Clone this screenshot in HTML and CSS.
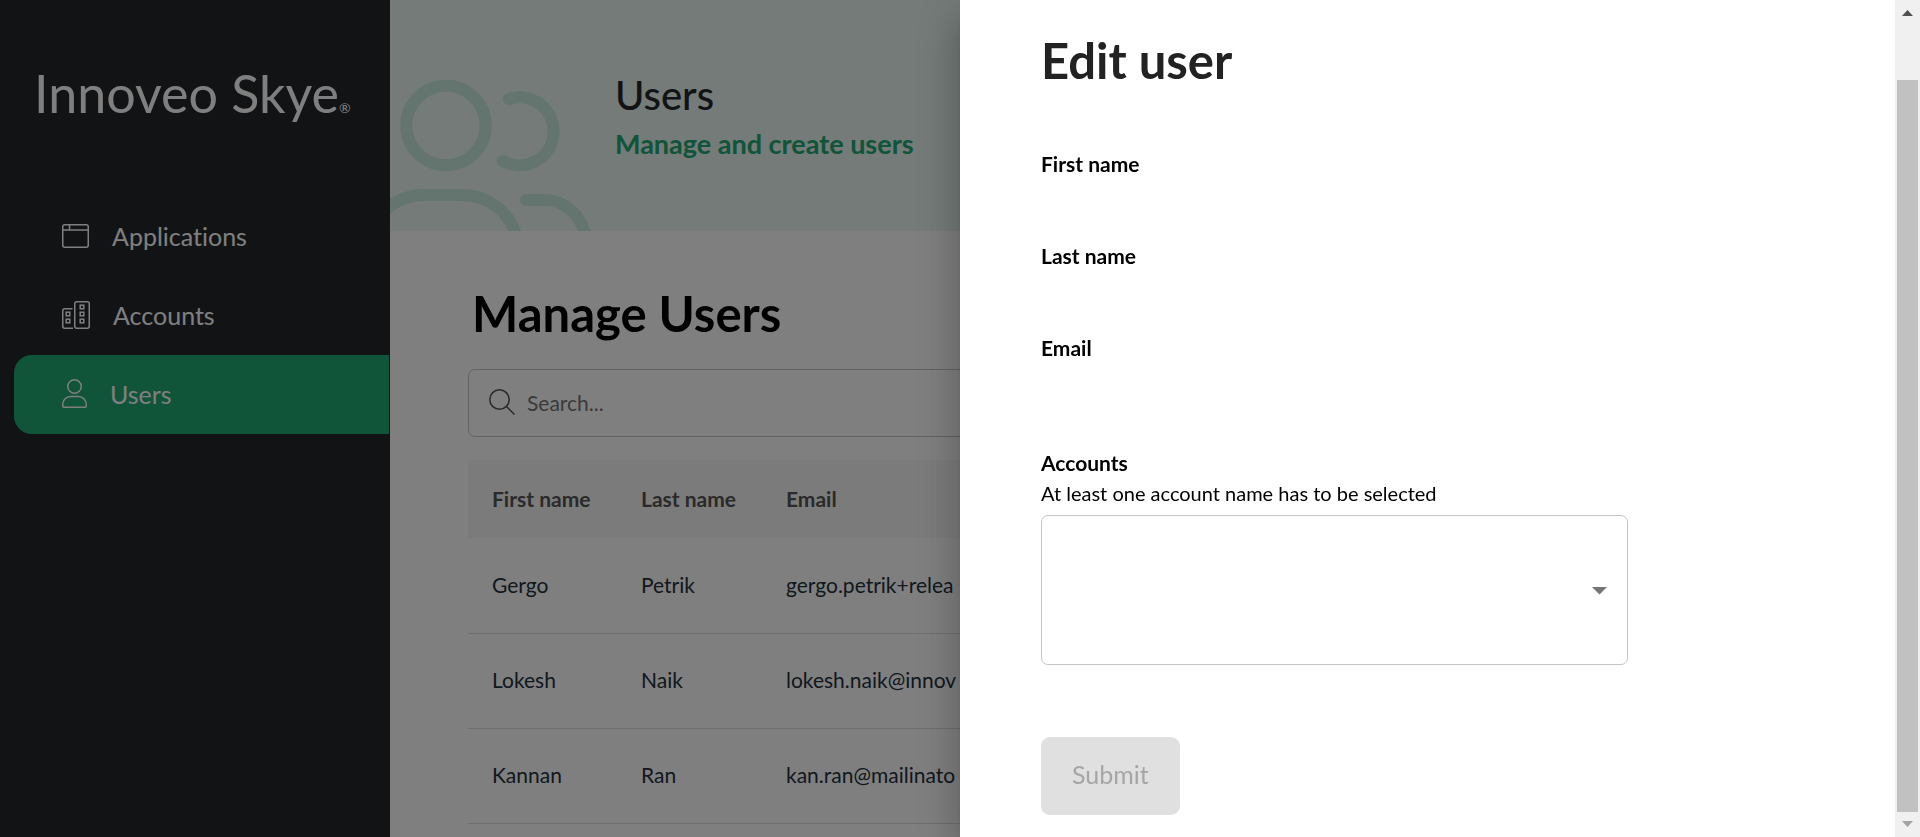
FILE: index.html
```html
<!DOCTYPE html>
<html lang="en">
<head>
<meta charset="utf-8">
<title>Innoveo Skye - Users</title>
<link rel="stylesheet" href="styles.css">
</head>
<body>
<div class="app">
  <aside class="sidebar">
    <div class="brand">Innoveo Skye<span class="brand-mark">®</span></div>
    <nav class="nav">
      <a class="nav-item" href="#applications">
        <svg width="27" height="24" viewBox="0 0 27 24" fill="none" stroke="currentColor" stroke-width="1.5"><rect x="0.75" y="0.75" width="25.5" height="22.5" rx="2"/><path d="M1 6h25M7.500 1v5"/></svg>
        <span>Applications</span>
      </a>
      <a class="nav-item" href="#accounts">
        <svg width="28" height="28" viewBox="0 0 28 28" fill="none" stroke="currentColor" stroke-width="1.5"><rect x="12.750" y="0.750" width="14.500" height="26.500" rx="2"/><path d="M10.500 7.750H2.750a2 2 0 0 0-2 2v15.500a2 2 0 0 0 2 2H11"/><rect x="18.200" y="4.200" width="3.600" height="3.600"/><rect x="18.200" y="11.200" width="3.600" height="3.600"/><rect x="18.200" y="18.200" width="3.600" height="3.600"/><rect x="4.200" y="11.200" width="3.600" height="3.600"/><rect x="4.200" y="18.200" width="3.600" height="3.600"/></svg>
        <span>Accounts</span>
      </a>
      <a class="nav-item nav-item-active" href="#users" aria-current="page">
        <svg width="25" height="29" viewBox="0 0 25 29" fill="none" stroke="currentColor" stroke-width="1.500"><circle cx="12.500" cy="7.500" r="6.750"/><path d="M.75 27v-1.500c0-4.500 3.500-8 8-8h7.500c4.500 0 8 3.500 8 8V27a1.200 1.200 0 0 1-1.200 1.200H2A1.200 1.200 0 0 1 .75 27z"/></svg>
        <span>Users</span>
      </a>
    </nav>
  </aside>

  <main class="main">
    <header class="hero">
      <svg class="hero-art" width="225" height="231" viewBox="0 0 225 231" fill="none" stroke="currentColor" stroke-width="12" stroke-linecap="round"><circle cx="56" cy="125.500" r="39.700"/><path d="M119 99a34 34 0 1 1-6 62"/><path d="M-22 243c4-28 27-48 57-48h36c30 0 52 20 57 48"/><path d="M136 200h18c22 0 38 16 43 40"/></svg>
      <div class="hero-text">
        <h1 class="hero-title">Users</h1>
        <p class="hero-subtitle">Manage and create users</p>
      </div>
    </header>
    <section class="content">
      <h2 class="section-title">Manage Users</h2>
      <label class="search">
        <svg width="26" height="26" viewBox="0 0 26 26" fill="none" stroke="currentColor" stroke-width="1.500"><circle cx="10.500" cy="10.500" r="9.700"/><path d="M17.500 17.500l8 8"/></svg>
        <input class="search-input" type="search" placeholder="Search..." aria-label="Search users">
      </label>
      <table class="users">
        <thead>
          <tr><th class="col-first">First name</th><th class="col-last">Last name</th><th>Email</th></tr>
        </thead>
        <tbody>
          <tr><td>Gergo</td><td>Petrik</td><td>gergo.petrik+relea</td></tr>
          <tr><td>Lokesh</td><td>Naik</td><td>lokesh.naik@innov</td></tr>
          <tr><td>Kannan</td><td>Ran</td><td>kan.ran@mailinato</td></tr>
        </tbody>
      </table>
    </section>
  </main>
</div>

<div class="backdrop"></div>

<div class="drawer" role="dialog" aria-labelledby="drawer-title">
  <form class="form">
    <h2 class="form-title" id="drawer-title">Edit user</h2>
    <div class="field">
      <label class="label" for="first-name">First name</label>
      <input class="text-input" id="first-name" type="text">
    </div>
    <div class="field">
      <label class="label" for="last-name">Last name</label>
      <input class="text-input" id="last-name" type="text">
    </div>
    <div class="field">
      <label class="label" for="email">Email</label>
      <input class="text-input" id="email" type="email">
    </div>
    <div class="accounts">
      <label class="label" for="accounts">Accounts</label>
      <p class="hint" id="accounts-hint">At least one account name has to be selected</p>
      <div class="select-wrap">
        <select class="select" id="accounts" aria-describedby="accounts-hint"></select>
        <svg class="select-arrow" width="15" height="8" viewBox="0 0 15 8"><path d="M0 0h15L7.500 7.500z" fill="currentColor"/></svg>
      </div>
    </div>
    <button class="submit" type="submit" disabled>Submit</button>
  </form>
  <div class="scrollbar" aria-hidden="true">
    <svg class="scroll-up" width="11" height="6" viewBox="0 0 11 6"><path d="M0 6h11L5.500 0z" fill="currentColor"/></svg>
    <div class="scroll-thumb"></div>
    <svg class="scroll-down" width="11" height="6" viewBox="0 0 11 6"><path d="M0 0h11L5.500 6z" fill="currentColor"/></svg>
  </div>
</div>
</body>
</html>
```
FILE: styles.css
```css
* {
  box-sizing: border-box;
}

body {
  margin: 0;
  font-family: Lato, "Liberation Sans", sans-serif;
  font-size: 20px;
  font-variant-ligatures: none;
  color: #000;
  background: #fff;
}

h1, h2, p {
  margin: 0;
}

.app {
  display: flex;
  height: 100vh;
  overflow: hidden;
}

/* Sidebar */
.sidebar {
  flex: none;
  width: 390px;
  background: #24272b;
  color: #fff;
}

.brand {
  padding: 62px 0 0 34px;
  font-size: 52px;
  line-height: 62px;
  white-space: nowrap;
}

.brand-mark {
  font-size: 14px;
}

.nav {
  display: flex;
  flex-direction: column;
  padding: 58px 1px 0 14px;
}

.nav-item {
  display: flex;
  align-items: center;
  gap: 23px;
  height: 79px;
  padding: 0 0 2px 48px;
  border-radius: 18px 0 0 18px;
  font-size: 25px;
  color: #fff;
  text-decoration: none;
}

.nav-item-active {
  background: #20a874;
}

/* Page */
.main {
  flex: 1;
  min-width: 0;
}

.hero {
  display: flex;
  height: 231px;
  background: #e9f6f1;
}

.hero-art {
  flex: none;
  color: #c8e8dc;
}

.hero-text {
  padding-top: 70px;
}

.hero-title {
  font-size: 40px;
  line-height: 50px;
  font-weight: 500;
  color: #24272b;
}

.hero-subtitle {
  font-size: 27px;
  line-height: 48px;
  font-weight: 700;
  color: #20a874;
}

.content {
  padding: 50px 78px 0;
}

.section-title {
  padding-left: 4px;
  font-size: 49px;
  line-height: 64px;
  font-weight: 700;
}

.search {
  display: flex;
  align-items: center;
  gap: 10px;
  height: 68px;
  margin-top: 24px;
  padding: 0 20px 2px;
  border: 1px solid #c4c4c4;
  border-radius: 7px;
  color: #555;
}

.search-input {
  flex: 1;
  border: 0;
  outline: 0;
  background: transparent;
  font: inherit;
  font-size: 21px;
}

.search-input::placeholder {
  color: #757575;
  opacity: 1;
}

.users {
  width: 100%;
  margin-top: 23px;
  border-collapse: collapse;
  text-align: left;
}

.users th,
.users td {
  padding: 0 0 2px 24px;
  font-size: 21px;
}

.users th {
  height: 78px;
  background: #f7f7f7;
  color: #555;
}

.users td {
  height: 95px;
  border-bottom: 1px solid #dcdcdc;
  color: #24303a;
  white-space: nowrap;
}

.users .col-first {
  width: 149px;
}

.users .col-last {
  width: 145px;
}

.backdrop {
  position: fixed;
  inset: 0;
  background: rgba(0, 0, 0, 0.5);
}

/* Drawer */
.drawer {
  position: fixed;
  inset: 0 0 0 50%;
  display: flex;
  background: #fff;
  box-shadow:
    0 12px 15px -8px rgba(0, 0, 0, 0.2),
    0 24px 36px 3px rgba(0, 0, 0, 0.14),
    0 9px 45px 8px rgba(0, 0, 0, 0.12);
}

.form {
  flex: 1;
  padding: 29px 81px 0;
  overflow: hidden;
}

.form-title {
  margin-bottom: 58px;
  font-size: 49px;
  line-height: 62px;
  font-weight: 700;
  color: #222;
}

.field {
  display: flex;
  flex-direction: column;
  height: 92px;
}

.label {
  display: block;
  font-size: 21px;
  line-height: 30px;
  font-weight: 700;
}

.text-input {
  max-width: 587px;
  height: 50px;
  padding: 0;
  border: 0;
  outline: 0;
  background: transparent;
  font: inherit;
}

.accounts {
  margin-top: 23px;
}

.hint {
  font-size: 20px;
  line-height: 30px;
}

.select-wrap {
  position: relative;
  max-width: 587px;
  margin-top: 7px;
}

.select {
  display: block;
  width: 100%;
  height: 150px;
  appearance: none;
  border: 1px solid #c4c4c4;
  border-radius: 7px;
  background: #fff;
  font: inherit;
}

.select-arrow {
  position: absolute;
  top: 72px;
  right: 21px;
  color: #757575;
  pointer-events: none;
}

.submit {
  height: 78px;
  margin-top: 72px;
  padding: 0 31px 4px;
  border: 0;
  border-radius: 9px;
  background: #e0e0e0;
  color: #a6a6a6;
  font-family: inherit;
  font-size: 25px;
}

.scrollbar {
  flex: none;
  display: flex;
  flex-direction: column;
  align-items: center;
  width: 25px;
  padding: 10px 0;
  background: #f0f0f0;
}

.scroll-up {
  margin-bottom: 64px;
  color: #505050;
}

.scroll-thumb {
  flex: 1;
  width: 21px;
  background: #c1c1c1;
}

.scroll-down {
  margin-top: 9px;
  color: #a3a3a3;
}
```
